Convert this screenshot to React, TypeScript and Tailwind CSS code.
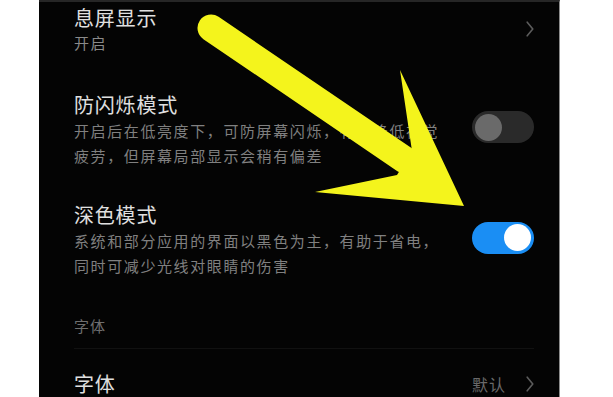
import React from 'react';

const Chevron: React.FC = () => (
  <svg width="8" height="16" viewBox="0 0 8 16" fill="none">
    <path d="M1.2 1.2 L6.8 8 L1.2 14.8" stroke="#5c5c5c" strokeWidth="1.6" strokeLinecap="round" strokeLinejoin="round" />
  </svg>
);

const Toggle: React.FC<{ on?: boolean }> = ({ on }) => (
  <div
    className={
      on
        ? 'w-[62px] h-[32px] rounded-full bg-[#1a8ef4] flex items-center justify-end px-[3px] shrink-0'
        : 'w-[62px] h-[32px] rounded-full bg-[#2a2a2a] flex items-center justify-start px-[3px] shrink-0'
    }
  >
    <div className={on ? 'w-[27px] h-[27px] rounded-full bg-white' : 'w-[27px] h-[27px] rounded-full bg-[#6a6a6a]'} />
  </div>
);

const App: React.FC = () => {
  return (
    <div className="relative w-[613px] h-[397px] overflow-hidden bg-white font-['Noto_Sans_CJK_SC','Noto_Sans',sans-serif]">
      {/* phone screen */}
      <div className="ml-[39px] w-[521px] h-full bg-[#040404] border-r border-[#8c8c8c] border-t-2 border-t-[#262626] pl-[35px] pr-[25px]">
        {/* 息屏显示 */}
        <div className="pt-[3px] flex items-center justify-between">
          <div>
            <p className="text-[20px] leading-[26px] tracking-[0.8px] text-[#e0e0e0]">息屏显示</p>
            <p className="mt-[2px] text-[15px] leading-[20px] tracking-[1.5px] text-[#8a8a8a]">开启</p>
          </div>
          <Chevron />
        </div>

        {/* 防闪烁模式 */}
        <div className="mt-[39px] flex items-center justify-between">
          <div>
            <p className="text-[20px] leading-[26px] tracking-[0.8px] text-[#e0e0e0]">防闪烁模式</p>
            <p className="text-[15px] leading-[25px] tracking-[1.6px] text-[#808080] whitespace-nowrap">
              开启后在低亮度下，可防屏幕闪烁，有效降低视觉
              <br />
              疲劳，但屏幕局部显示会稍有偏差
            </p>
          </div>
          <div className="-mt-[6px]">
            <Toggle />
          </div>
        </div>

        {/* 深色模式 */}
        <div className="mt-[34px] flex items-center justify-between">
          <div>
            <p className="text-[20px] leading-[26px] tracking-[0.8px] text-[#e0e0e0]">深色模式</p>
            <p className="text-[15px] leading-[25px] tracking-[1.6px] text-[#808080] whitespace-nowrap">
              系统和部分应用的界面以黑色为主，有助于省电，
              <br />
              同时可减少光线对眼睛的伤害
            </p>
          </div>
          <div className="-mt-[5px]">
            <Toggle on />
          </div>
        </div>

        {/* section header */}
        <p className="mt-[38px] text-[15px] leading-[20px] tracking-[1px] text-[#6e6e6e]">字体</p>
        <div className="mt-[12px] h-px bg-[#111111]" />

        {/* 字体 */}
        <div className="mt-[22px] flex items-center justify-between">
          <p className="text-[20px] leading-[26px] tracking-[0.8px] text-[#e0e0e0]">字体</p>
          <div className="flex items-center gap-[20px]">
            <span className="text-[16px] leading-[22px] tracking-[1px] text-[#6a6a6a]">默认</span>
            <Chevron />
          </div>
        </div>
      </div>

      {/* yellow arrow overlay */}
      <svg className="absolute inset-0 pointer-events-none" width="613" height="397" viewBox="0 0 613 397">
        <path d="M211 28 L405 160" stroke="#f4f41c" strokeWidth="27" strokeLinecap="round" />
        <polygon points="400,70 464,206 315,192 397,175 412,151" fill="#f4f41c" />
      </svg>
    </div>
  );
};

export default App;
